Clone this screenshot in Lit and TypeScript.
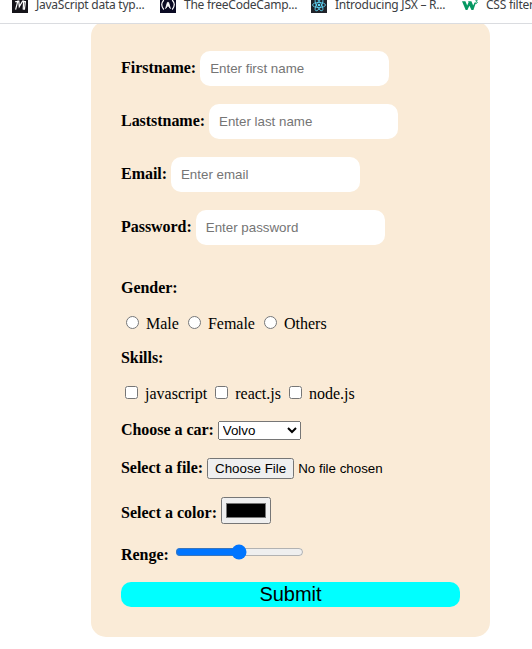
import { LitElement, html, css, svg } from "lit";
import { customElement } from "lit/decorators.js";

const icons = [
  svg`<rect width="16" height="16" fill="#15141a"/><path d="M3.6 12.6L5.8 4.2H6.8L7.3 9.6L10.6 4.2H11.6L11.2 12.6M3.2 4.6H6.4M11 4.6H13.4L12.4 12.6" fill="none" stroke="#fff" stroke-width="1.2"/>`,
  svg`<rect width="16" height="16" fill="#0a0a23"/><path d="M3.8 3Q-.3 7.5 3.8 12.5M12.2 3Q16.3 7.5 12.2 12.5" fill="none" stroke="#fff" stroke-width="1.2"/><path d="M5.6 11.6L7.4 5.4H8.6L10.4 11.6L8 8.6Z" fill="#fff" stroke="#fff" stroke-width=".8"/>`,
  svg`<rect width="16" height="16" fill="#20232a"/><g fill="none" stroke="#61dafb" stroke-width=".8"><ellipse cx="8" cy="8" rx="6.5" ry="2.5"/><ellipse cx="8" cy="8" rx="6.5" ry="2.5" transform="rotate(60 8 8)"/><ellipse cx="8" cy="8" rx="6.5" ry="2.5" transform="rotate(120 8 8)"/></g><circle cx="8" cy="8" r="1.3" fill="#61dafb"/>`,
  svg`<path d="M0 4.2H3.4L5.2 8.4L6.6 5.2L6 4.2H9.4L11.2 8.4L12.6 5.6H14L11.4 13H9.5L7.4 8.8L5.4 13H3.7Z" fill="#059862"/><path d="M13 3H15.3L14.2 4.3Q15.8 4.7 15.1 6Q14.2 7 13 6.1" fill="none" stroke="#059862" stroke-width=".9"/>`,
];
const bookmarks = ["JavaScript data typ...", "The freeCodeCamp...", "Introducing JSX – R...", "CSS filter"];

const fields = [
  { label: "Firstname:", type: "text", hint: "Enter first name" },
  { label: "Laststname:", type: "text", hint: "Enter last name" },
  { label: "Email:", type: "email", hint: "Enter email" },
  { label: "Password:", type: "password", hint: "Enter password" },
];

@customElement("bookmark-bar")
export class BookmarkBar extends LitElement {
  static styles = css`
    :host { display: block; position: relative; z-index: 1; height: 23px; overflow: hidden; background: #fff; border-bottom: 1px solid #dadce0; }
    .items { display: grid; grid-template-columns: 148px 151px 151px 100px; margin-left: 12px; margin-top: -3px; }
    .item { display: flex; align-items: center; gap: 8px; height: 16px; white-space: nowrap; font: 12px/16px "Noto Sans", "Open Sans", sans-serif; letter-spacing: -0.25px; color: #3c4043; }
    .icon { width: 16px; height: 16px; flex: none; }
  `;
  render() {
    return html`<div class="items">
      ${bookmarks.map((b, i) => html`<div class="item"><svg class="icon" viewBox="0 0 16 16">${icons[i]}</svg><span>${b}</span></div>`)}
    </div>`;
  }
}

@customElement("app-root")
export class AppRoot extends LitElement {
  static styles = css`
    :host { display: block; height: 649px; overflow: hidden; background: #fff; color: #000; font: 16px/18px "Liberation Serif", serif; }
    .card { box-sizing: border-box; width: 399px; height: 616px; margin: -3px 0 0 91px; padding: 30px; border-radius: 15px; background: #faebd7; }
    .row { display: flow-root; white-space: nowrap; }
    .field { height: 35px; margin-bottom: 18px; }
    .gender { height: 18px; margin-top: 34px; }
    .radios { height: 18px; margin-top: 16px; }
    .skills { height: 18px; margin-top: 18px; }
    .checks { height: 18px; margin-top: 16px; }
    .car { height: 19px; margin-top: 20px; }
    .file { height: 21px; margin-top: 18px; }
    .color { height: 27px; margin-top: 18px; }
    .range { height: 20px; margin-top: 18px; }
    .label { font-weight: bold; letter-spacing: -0.04px; }
    .color .label { letter-spacing: normal; }
    input, select, button { font-family: "Liberation Sans", Arial, sans-serif; font-size: 13.333px; }
    .text { box-sizing: border-box; width: 189px; height: 35px; padding: 10px; border: 0; border-radius: 10px; }
    .select { width: 83px; height: 19px; box-sizing: border-box; }
    .submit { display: block; width: 339px; height: 25px; margin-top: 20px; padding: 0; border: 0; border-radius: 10px; background: #0ff; color: #000; font-size: 20px; line-height: 23px; }
  `;
  render() {
    return html`
      <bookmark-bar></bookmark-bar>
      <form class="card">
        ${fields.map((f) => html`<div class="row field"><label class="label">${f.label}</label> <input class="text" type=${f.type} placeholder=${f.hint}></div>`)}
        <div class="row gender"><span class="label">Gender:</span></div>
        <div class="row radios">${["Male", "Female", "Others"].map((g) => html`<input type="radio" name="gender"> <label>${g}</label> `)}</div>
        <div class="row skills"><span class="label">Skills:</span></div>
        <div class="row checks">${["javascript", "react.js", "node.js"].map((s) => html`<input type="checkbox"> <label>${s}</label> `)}</div>
        <div class="row car"><label class="label">Choose a car:</label> <select class="select"><option>Volvo</option></select></div>
        <div class="row file"><label class="label">Select a file:</label> <input type="file"></div>
        <div class="row color"><label class="label">Select a color:</label> <input type="color" value="#000000"></div>
        <div class="row range"><label class="label">Renge:</label> <input type="range"></div>
        <button class="submit" type="button">Submit</button>
      </form>
    `;
  }
}
